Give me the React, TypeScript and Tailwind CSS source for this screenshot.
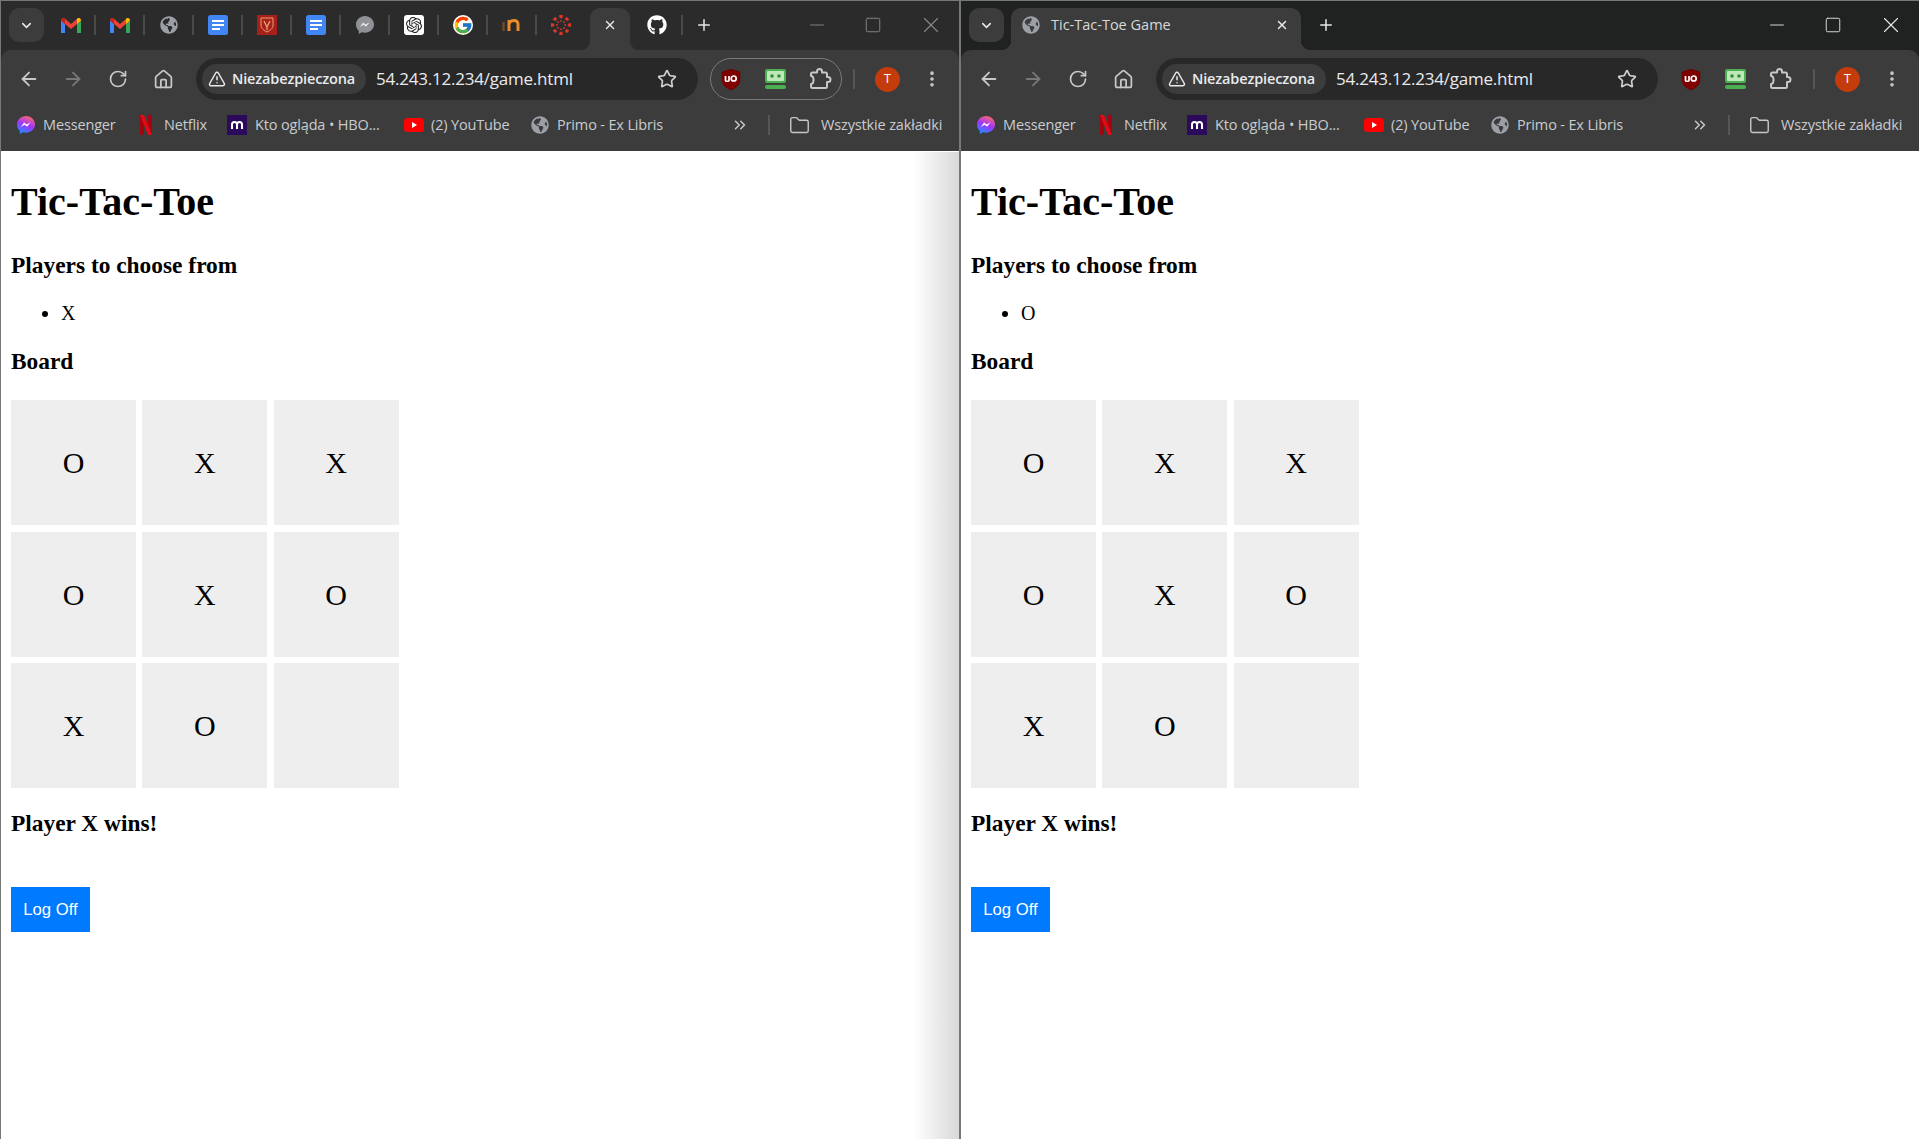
import React from 'react';
import { ArrowLeft, ArrowRight, RotateCw, House, Star, TriangleAlert, Plus, X, ChevronDown, ChevronsRight, Folder, Minus, Square, EllipsisVertical } from 'lucide-react';
import { FaGithub, FaGlobeAmericas } from 'react-icons/fa';
import { FcGoogle } from 'react-icons/fc';
import { SiOpenai } from 'react-icons/si';

const uiFont = "font-['Open_Sans',sans-serif]";
const serifFont = "font-['Liberation_Serif',serif]";

const board = ['O', 'X', 'X', 'O', 'X', 'O', 'X', 'O', ''];

function GmailIcon() {
  return (
    <svg width="20" height="15" viewBox="0 0 20 15">
      <path d="M0 2.5V15h4V6z" fill="#4285f4" />
      <path d="M20 2.5V15h-4V6z" fill="#34a853" />
      <path d="M0 2.5C0 .5 2.2-.6 3.6.6L10 6l6.400-5.400C17.800-.6 20 .5 20 2.500L16 6l-6 5-6-5z" fill="#ea4335" />
      <path d="M16 .9l.4-.3C17.800-.6 20 .5 20 2.500L16 6z" fill="#fbbc04" />
      <path d="M4 .9L3.600.6C2.200-.6 0 .5 0 2.500L4 6z" fill="#c5221f" />
    </svg>
  );
}

function DocsIcon() {
  return (
    <svg width="20" height="20" viewBox="0 0 20 20">
      <rect width="20" height="20" rx="2.500" fill="#4285f4" />
      <path d="M4 5h12v2H4zM4 9h12v2H4zM4 13h8v2H4z" fill="#fff" />
    </svg>
  );
}

function ShieldIcon() {
  return (
    <svg width="20" height="20" viewBox="0 0 20 20">
      <rect width="20" height="20" fill="#a8201a" />
      <path d="M4 3h12v7c0 3.500-3 5.500-6 7-3-1.500-6-3.500-6-7z" fill="none" stroke="#e8a070" strokeWidth="1" />
      <path d="M7 6l3 6 3-6M10 12v3" fill="none" stroke="#e8b080" strokeWidth="1.200" />
    </svg>
  );
}

function MessengerGray() {
  return (
    <svg width="18" height="18" viewBox="0 0 18 18">
      <path d="M9 0C4 0 0 3.700 0 8.500c0 2.500 1 4.700 2.800 6.200V18l3-1.700c1 .3 2.100.4 3.200.4 5 0 9-3.600 9-8.200S14 0 9 0z" fill="#8f9194" />
      <path d="M3.800 11l3.300-4.500 2.500 2 3.900-2.300-3.400 4.600-2.500-2z" fill="#e8eaed" />
    </svg>
  );
}

function MessengerColor({ id }: { id: string }) {
  return (
    <svg width="18" height="18" viewBox="0 0 18 18">
      <defs>
        <linearGradient id={id} x1="0.300" y1="1" x2="0.700" y2="0">
          <stop offset="0" stopColor="#1e8fff" />
          <stop offset="0.500" stopColor="#a033ff" />
          <stop offset="1" stopColor="#ff6a68" />
        </linearGradient>
      </defs>
      <path d="M9 0C4 0 0 3.700 0 8.500c0 2.500 1 4.700 2.800 6.200V18l3-1.700c1 .3 2.100.4 3.200.4 5 0 9-3.600 9-8.200S14 0 9 0z" fill={`url(#${id})`} />
      <path d="M3.800 11l3.300-4.500 2.500 2 3.900-2.300-3.400 4.600-2.500-2z" fill="#fff" />
    </svg>
  );
}

function InIcon() {
  return (
    <svg width="20" height="12" viewBox="0 0 20 12">
      <path d="M1.500 3v9" stroke="#6b4a2a" strokeWidth="2.500" />
      <path d="M7 12V1M7 4.500C8 2.500 9.500 1.500 12 1.500c2.500 0 4 1.500 4 4V12" fill="none" stroke="#e98a2b" strokeWidth="3" />
    </svg>
  );
}

function CanvasIcon() {
  const spokes = [0, 45, 90, 135, 180, 225, 270, 315];
  return (
    <svg width="20" height="20" viewBox="0 0 20 20">
      {spokes.map(a => (
        <g key={a} transform={`rotate(${a} 10 10)`} fill="#e0352b">
          <path d="M8 .2a10 10 0 0 1 4 0l-.7 3h-2.600z" />
          <circle cx="10" cy="5.800" r=".9" />
        </g>
      ))}
    </svg>
  );
}

function NetflixIcon() {
  return (
    <svg width="12" height="20" viewBox="0 0 12 20">
      <path d="M0 0h4v20H0z" fill="#a00610" />
      <path d="M8 0h4v20H8z" fill="#a00610" />
      <path d="M0 0h4l8 20H8z" fill="#e50914" />
    </svg>
  );
}

function YoutubeIcon() {
  return (
    <svg width="20" height="14" viewBox="0 0 20 14">
      <rect width="20" height="14" rx="3.500" fill="#f00" />
      <path d="M8 4l5 3-5 3z" fill="#fff" />
    </svg>
  );
}

function MaxIcon() {
  return (
    <svg width="20" height="20" viewBox="0 0 20 20">
      <rect width="20" height="20" fill="#2b0a5c" />
      <path d="M5 14V9.500C5 8 6 7 7.500 7S10 8 10 9.500V14M10 9.500C10 8 11 7 12.500 7S15 8 15 9.500V14" fill="none" stroke="#fff" strokeWidth="2" />
    </svg>
  );
}

function UblockIcon() {
  return (
    <svg width="20" height="21" viewBox="0 0 20 21">
      <path d="M10 0l9 3v8c0 4.500-4 8-9 10C5 19 1 15.500 1 11V3z" fill="#800000" stroke="#5c0000" strokeWidth=".5" />
      <path d="M4.500 7v4.500c0 1 3.500 1 3.500 0V7" fill="none" stroke="#fff" strokeWidth="1.700" />
      <circle cx="12.700" cy="9.500" r="2.500" fill="none" stroke="#fff" strokeWidth="1.700" />
    </svg>
  );
}

function RoboformIcon() {
  return (
    <svg width="21" height="21" viewBox="0 0 21 21">
      <rect width="21" height="14" rx="2" fill="#4caf50" />
      <rect x="2" y="2" width="17" height="10" rx="1" fill="#bfe8b8" />
      <circle cx="7" cy="7" r="1.800" fill="#2f8f33" />
      <circle cx="14" cy="7" r="1.800" fill="#2f8f33" />
      <rect y="16" width="21" height="4" rx="2" fill="#4caf50" />
    </svg>
  );
}

function ExtensionIcon() {
  return (
    <svg width="24" height="24" viewBox="0 0 24 24" fill="none" stroke="#c7c7c7" strokeWidth="2" strokeLinejoin="round">
      <path d="M3 9V7a1.500 1.500 0 0 1 1.500-1.500H9V4.500a2.500 2.500 0 0 1 5 0v1h3.500A1.500 1.500 0 0 1 19 7v3h1a2.500 2.500 0 0 1 0 5h-1v4.500a1.500 1.500 0 0 1-1.500 1.500h-13A1.500 1.500 0 0 1 3 19.500V17a2.500 4 0 0 0 0-8z" />
    </svg>
  );
}

const pinned = [
  <GmailIcon />,
  <GmailIcon />,
  <FaGlobeAmericas size={18} color="#9aa0a6" />,
  <DocsIcon />,
  <ShieldIcon />,
  <DocsIcon />,
  <MessengerGray />,
  <span className="flex h-5 w-5 items-center justify-center rounded-[3px] bg-white"><SiOpenai size={16} color="#222" /></span>,
  <FcGoogle size={20} className="rounded-full bg-white" />,
  <InIcon />,
  <CanvasIcon />,
];

function Separator() {
  return <div className="h-5 w-[2px] shrink-0 bg-[#4a4a4a]" />;
}

function TabCorners() {
  return (
    <>
      <div className="absolute bottom-0 left-[-10px] h-[10px] w-[10px] bg-[radial-gradient(circle_at_0_0,transparent_10px,#3c3c3c_10.500px)]" />
      <div className="absolute right-[-10px] bottom-0 h-[10px] w-[10px] bg-[radial-gradient(circle_at_100%_0,transparent_10px,#3c3c3c_10.500px)]" />
    </>
  );
}

function WindowButtons({ dim }: { dim: boolean }) {
  const color = dim ? 'text-[#8a8a8a]' : 'text-[#e8e8e8]';
  return (
    <div className={`ml-auto flex h-[42px] items-center pt-[6px] pr-[15px] ${color}`}>
      <Minus size={22} strokeWidth={1} />
      <Square size={18} strokeWidth={1.200} className="ml-[36px]" />
      <X size={26} strokeWidth={1} className="ml-[36px]" />
    </div>
  );
}

function ManyTabs() {
  return (
    <div className="flex h-full w-full bg-[#2b2b2b]">
      <div className="mt-[7px] ml-2 flex h-[34px] w-[35px] shrink-0 items-center justify-center rounded-[10px] bg-[#3c3c3c] text-[#e8e8e8]">
        <ChevronDown size={15} strokeWidth={2.500} />
      </div>
      <div className="ml-[3px] flex h-[42px] items-center pt-[6px]">
        {pinned.map((icon, i) => (
          <React.Fragment key={i}>
            <div className="flex w-[47px] items-center justify-center">{icon}</div>
            {i < pinned.length - 1 ? <Separator /> : null}
          </React.Fragment>
        ))}
      </div>
      <div className="relative mt-[7px] ml-[6px] flex h-[42px] w-[40px] shrink-0 items-center justify-center rounded-t-[10px] bg-[#3c3c3c] pb-[8px] text-[#e8e8e8]">
        <X size={14} strokeWidth={2.500} />
        <TabCorners />
      </div>
      <div className="flex h-[42px] w-[37px] items-center justify-end pt-[6px]"><FaGithub size={20} color="#fff" /></div>
      <div className="ml-[14px] flex h-[42px] items-center pt-[6px]"><Separator /></div>
      <div className="ml-[12px] flex h-[42px] items-center pt-[6px] text-[#e8e8e8]"><Plus size={18} strokeWidth={2} /></div>
      <WindowButtons dim />
    </div>
  );
}

function OneTab() {
  return (
    <div className="flex h-full w-full bg-[#202221]">
      <div className="mt-[7px] ml-2 flex h-[34px] w-[35px] shrink-0 items-center justify-center rounded-[10px] bg-[#3c3c3c] text-[#e8e8e8]">
        <ChevronDown size={15} strokeWidth={2.500} />
      </div>
      <div className={`relative mt-[7px] ml-[7px] flex h-[42px] w-[290px] shrink-0 items-center rounded-t-[10px] bg-[#3c3c3c] pr-[12px] pb-[8px] pl-[11px] ${uiFont} text-[14.500px] text-[#d8d8d8]`}>
        <FaGlobeAmericas size={18} color="#9aa0a6" />
        <span className="ml-[11px]">Tic-Tac-Toe Game</span>
        <X size={14} strokeWidth={2.500} className="ml-auto text-[#e8e8e8]" />
        <TabCorners />
      </div>
      <div className="ml-[16px] flex h-[42px] items-center pt-[6px] text-[#e8e8e8]"><Plus size={18} strokeWidth={2} /></div>
      <WindowButtons dim={false} />
    </div>
  );
}

function Toolbar({ pill }: { pill: boolean }) {
  const pillClasses = pill ? 'border-[#7a7a7a]' : 'border-transparent';
  return (
    <div className="flex h-[51px] items-center pt-[7px]">
      <div className="flex w-[195px] shrink-0 items-center pl-[17px] text-[#c7c7c7]">
        <ArrowLeft size={22} strokeWidth={2} />
        <ArrowRight size={22} strokeWidth={2} className="ml-[22px] text-[#777]" />
        <RotateCw size={20} strokeWidth={2} className="ml-[24px]" />
        <House size={21} strokeWidth={2} className="ml-[25px]" />
      </div>
      <div className="flex h-[42px] w-[502px] shrink-0 items-center rounded-full bg-[#282828] pr-[21px] pl-[6px]">
        <div className={`flex h-[30px] w-[164px] shrink-0 items-center rounded-full bg-[#3c3c3c] pl-[6px] ${uiFont} text-[14.500px] font-semibold text-[#e8eaed]`}>
          <TriangleAlert size={18} strokeWidth={2} />
          <span className="ml-[6px] tracking-[-0.15px]">Niezabezpieczona</span>
        </div>
        <span className={`ml-[10px] ${uiFont} text-[17px] tracking-[-0.22px] text-[#e8eaed]`}>54.243.12.234/game.html</span>
        <Star size={20} strokeWidth={2} className="ml-auto text-[#d0d0d0]" />
      </div>
      <div className={`ml-[12px] flex h-[42px] w-[132px] shrink-0 items-center rounded-full border ${pillClasses} pl-[10px]`}>
        <UblockIcon />
        <div className="ml-[24px]"><RoboformIcon /></div>
        <div className="ml-[22px]"><ExtensionIcon /></div>
      </div>
      <div className="ml-[11px] h-5 w-[2px] bg-[#565656]" />
      <div className="ml-[20px] flex h-[25px] w-[25px] items-center justify-center rounded-full bg-[#c43c0c] font-['Liberation_Sans',sans-serif] text-[12px] text-white">T</div>
      <EllipsisVertical size={20} strokeWidth={2.400} className="ml-[22px] text-[#c7c7c7]" />
    </div>
  );
}

function Bookmarks({ gradientId }: { gradientId: string }) {
  const text = 'text-[14.500px] tracking-[-0.15px] text-[#c8ccd0] whitespace-nowrap';
  return (
    <div className={`flex h-[50px] items-center pb-[2px] pl-[16px] ${uiFont} ${text}`}>
      <MessengerColor id={gradientId} />
      <span className="ml-[8px] w-[74px]">Messenger</span>
      <div className="ml-[23px]"><NetflixIcon /></div>
      <span className="ml-[12px] w-[44px]">Netflix</span>
      <div className="ml-[19px]"><MaxIcon /></div>
      <span className="ml-[8px] w-[127px]">Kto ogląda • HBO...</span>
      <div className="ml-[22px]"><YoutubeIcon /></div>
      <span className="ml-[7px] w-[80px]">(2) YouTube</span>
      <FaGlobeAmericas size={18} color="#9aa0a6" className="ml-[20px]" />
      <span className="ml-[8px] w-[107px]">Primo - Ex Libris</span>
      <ChevronsRight size={18} strokeWidth={2} className="ml-[67px] text-[#c7c7c7]" />
      <div className="ml-[19px] h-5 w-[2px] bg-[#565656]" />
      <Folder size={21} strokeWidth={1.600} className="ml-[19px] text-[#c7c7c7]" />
      <span className="ml-[11px]">Wszystkie zakładki</span>
    </div>
  );
}

function GamePage({ player }: { player: string }) {
  return (
    <div className={`flex-1 bg-white px-[10px] pt-[28px] text-[20px] text-black ${serifFont}`}>
      <h1 className="mb-[27px] text-[40px] leading-[46px] font-bold">Tic-Tac-Toe</h1>
      <h3 className="mb-[23px] text-[23.400px] leading-[27px] font-bold">Players to choose from</h3>
      <ul className="mb-[23px] list-disc pl-[50px] leading-[23px]">
        <li>{player}</li>
      </ul>
      <h3 className="mb-[25.400px] text-[23.400px] leading-[27px] font-bold">Board</h3>
      <div className="grid w-fit grid-cols-[repeat(3,125px)] gap-[6.250px]">
        {board.map((cell, i) => (
          <div key={i} className="flex h-[125px] items-center justify-center bg-[#eeeeee] text-[30px]">{cell}</div>
        ))}
      </div>
      <h3 className="mt-[22.600px] text-[23.400px] leading-[27px] font-bold">Player X wins!</h3>
      <button className="mt-[50px] h-[45px] w-[79px] bg-[#007bff] font-['Liberation_Sans',sans-serif] text-[16.700px] text-white">Log Off</button>
    </div>
  );
}

function BrowserWindow({ active }: { active: boolean }) {
  return (
    <div className={`relative flex h-full min-w-0 flex-col overflow-hidden border-l border-[#777] ${active ? '' : 'border-r'}`}>
      <div className="h-[49px] shrink-0">{active ? <OneTab /> : <ManyTabs />}</div>
      <div className={`h-[101px] shrink-0 ${active ? 'bg-[#202221]' : 'bg-[#2b2b2b]'}`}>
        <div className="h-full rounded-t-[10px] bg-[#3c3c3c]">
          <Toolbar pill={!active} />
          <Bookmarks gradientId={active ? 'msgr-b' : 'msgr-a'} />
        </div>
      </div>
      <GamePage player={active ? 'O' : 'X'} />
      {!active ? <div className="pointer-events-none absolute top-[151px] right-0 bottom-0 w-[45px] bg-gradient-to-r from-transparent to-black/15" /> : null}
    </div>
  );
}

export default function App() {
  return (
    <div className="grid h-[1139px] w-[1919px] grid-cols-[960px_959px] overflow-hidden border-t border-[#777] bg-white">
      <BrowserWindow active={false} />
      <BrowserWindow active />
    </div>
  );
}
